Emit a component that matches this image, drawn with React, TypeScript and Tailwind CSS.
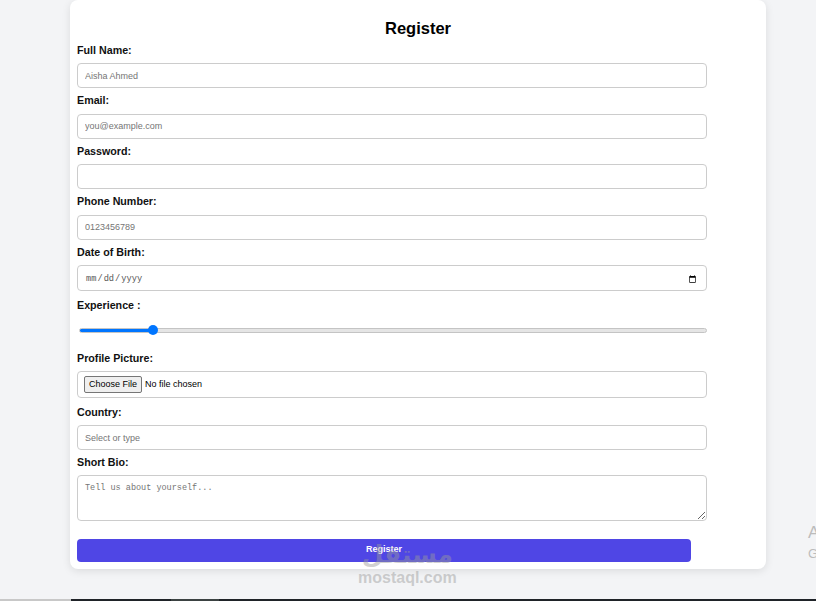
import React from "react";

const labelCls = "block font-bold text-[10.7px] leading-[13px] text-[#111]";
const inputCls =
  "block w-[630px] h-[25px] border border-[#cccccc] rounded-[4px] px-[7px] text-[9px] text-[#222] placeholder:text-[#757575] bg-white outline-none";

function Field({ label, children, gapBelow = "mb-[6px]" }: { label: string; children: React.ReactNode; gapBelow?: string }) {
  return (
    <div className={gapBelow}>
      <label className={labelCls}>{label}</label>
      <div className="mt-[6.5px]">{children}</div>
    </div>
  );
}

export default function App() {
  const exp = 11;
  const pct = exp;
  return (
    <div
      className="relative w-[816px] h-[601px] overflow-hidden bg-[#f3f4f6] flex flex-col"
      style={{ fontFamily: '"Liberation Sans", Arial, sans-serif' }}
    >
      <div className="flex-1 flex">
        <div className="shrink-0 ml-[70px] w-[696px] h-[569px] bg-white rounded-[8px] shadow-[0_2px_8px_rgba(0,0,0,0.10)] pl-[7px] flex flex-col">
          <h1 className="pt-[18px] h-[38px] text-center text-[16.5px] leading-[20px] font-bold text-black pr-[7px]">
            Register
          </h1>
          <div className="mt-[5.5px]">
            <Field label="Full Name:">
              <input className={inputCls} placeholder="Aisha Ahmed" />
            </Field>
            <Field label="Email:">
              <input className={inputCls} placeholder="you@example.com" />
            </Field>
            <Field label="Password:">
              <input type="password" className={inputCls} />
            </Field>
            <Field label="Phone Number:">
              <input className={inputCls} placeholder="0123456789" />
            </Field>
            <Field label="Date of Birth:" gapBelow="mb-[7.5px]">
              <input
                type="date"
                className="block w-[630px] h-[26px] border border-[#cccccc] rounded-[4px] px-[7px] pt-[3px] text-[8.7px] text-[#555] bg-white outline-none"
                style={{ fontFamily: '"Liberation Mono", "DejaVu Sans Mono", monospace' }}
              />
            </Field>
            <div className="mb-[7px]">
              <label className={labelCls}>Experience :</label>
              <div className="h-[33px] pt-[16px]">
                <input
                  type="range"
                  min={0}
                  max={100}
                  defaultValue={exp}
                  className="block ml-[2px] w-[628px] h-[5px] appearance-none rounded-full border border-[#c4c4c4] outline-none [&::-webkit-slider-thumb]:appearance-none [&::-webkit-slider-thumb]:w-[10px] [&::-webkit-slider-thumb]:h-[10px] [&::-webkit-slider-thumb]:rounded-full [&::-webkit-slider-thumb]:bg-[#0075ff]"
                  style={{
                    background: `linear-gradient(to right, #0075ff 0%, #0075ff ${pct}%, #e5e5e5 ${pct}%, #e5e5e5 100%)`,
                  }}
                />
              </div>
            </div>
            <Field label="Profile Picture:" gapBelow="mb-[7.5px]">
              <div className="w-[630px] h-[27px] border border-[#cccccc] rounded-[4px] px-[6px] flex items-center">
                <input
                  type="file"
                  className="text-[9px] text-black file:mr-[3px] file:text-[9px] file:px-[4px] file:py-[1px] file:border file:border-solid file:border-[#767676] file:bg-[#efefef] file:rounded-[2px] file:text-black"
                />
              </div>
            </Field>
            <Field label="Country:">
              <input className={inputCls} placeholder="Select or type" />
            </Field>
            <div>
              <label className={labelCls}>Short Bio:</label>
              <textarea
                className="mt-[5.5px] block w-[630px] h-[46px] border border-[#cccccc] rounded-[4px] px-[7px] pt-[6px] text-[8.5px] placeholder:text-[#757575] bg-white outline-none"
                style={{ fontFamily: '"Liberation Mono", "DejaVu Sans Mono", monospace' }}
                placeholder="Tell us about yourself..."
              />
            </div>
            <button className="mt-[18px] w-[614px] h-[23px] rounded-[4px] bg-[#4f46e5] text-white text-[9px] font-bold">
              Register
            </button>
          </div>
        </div>
        <div className="shrink-0 ml-[42px] mt-[522px] flex flex-col text-[#bcbcbc] whitespace-nowrap">
          <span className="text-[17px] leading-[22px]">About</span>
          <span className="text-[13px] leading-[20px]">Get</span>
        </div>
      </div>
      <div className="h-[2px] flex">
        <div className="w-[71px] bg-[#c8c8c8]" />
        <div className="w-[100px] bg-[#1f2328]" />
        <div className="w-[48px] bg-[#3b4242]" />
        <div className="flex-1 bg-[#1f2328]" />
      </div>
      <div className="absolute left-[358px] top-[541px] flex flex-col items-center pointer-events-none opacity-45 text-[#9a9a9a]">
        <span className="text-[25px] leading-[28px] font-bold" style={{ fontFamily: '"DejaVu Sans", sans-serif' }}>
          مستقل
        </span>
        <span className="text-[16px] leading-[17px] font-bold">mostaql.com</span>
      </div>
    </div>
  );
}
